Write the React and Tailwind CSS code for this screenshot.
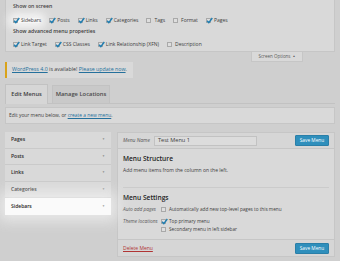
const Check = ({ checked }) => (
  <span className="relative inline-block w-[5px] h-[5px] shrink-0 border border-[#a9a9a9] bg-[#dedede]">
    {checked && (
      <svg viewBox="0 0 10 10" className="absolute -left-[1px] -top-[2px] w-[7px] h-[7px]">
        <path d="M1.5 5.5 L4 8 L9 1.5" fill="none" stroke="#1f7db0" strokeWidth="2" />
      </svg>
    )}
  </span>
);

const Opt = ({ label, checked = true, lit = false }) => (
  <span
    className={
      lit
        ? "flex items-center gap-[3px] bg-[#f7f7f7] shadow-[0_0_8px_5px_rgba(247,247,247,0.9)] rounded-sm"
        : "flex items-center gap-[3px]"
    }
  >
    <Check checked={checked} />
    <span>{label}</span>
  </span>
);

const accordion = ["Pages", "Posts", "Links", "Categories"];

export default function App() {
  return (
    <div className="w-[340px] h-[261px] overflow-hidden bg-[#cfcfcf] text-[#3c3c3c] font-['Open_Sans',sans-serif] text-[5px] leading-none">
      {/* screen options */}
      <div className="mx-[5px] h-[52px] bg-[#d9d9d9] border-x border-b border-[#c6c6c6] px-[7px] pt-[4px]">
        <div className="text-[5.2px] font-semibold h-[5px] flex items-center">Show on screen</div>
        <div className="flex items-center gap-[8px] mt-[7px] h-[8px]">
          <Opt label="Sidebars" lit />
          <Opt label="Posts" />
          <Opt label="Links" />
          <Opt label="Categories" />
          <Opt label="Tags" checked={false} />
          <Opt label="Format" checked={false} />
          <Opt label="Pages" />
        </div>
        <div className="text-[5.2px] font-semibold h-[5px] flex items-center mt-[5px]">
          Show advanced menu properties
        </div>
        <div className="flex items-center gap-[8px] mt-[6px] h-[8px]">
          <Opt label="Link Target" />
          <Opt label="CSS Classes" />
          <Opt label="Link Relationship (XFN)" />
          <Opt label="Description" checked={false} />
        </div>
      </div>
      <div className="flex justify-end pr-[37px]">
        <div className="w-[52px] h-[10px] bg-[#d9d9d9] border-x border-b border-[#c6c6c6] flex items-center justify-center gap-[2px] text-[#5a5a5a] text-[4.5px]">
          Screen Options <span className="text-[3px]">▲</span>
        </div>
      </div>

      {/* update notice */}
      <div className="ml-[5px] w-[128px] h-[16px] bg-[#d9d9d9] border-l-2 border-[#d9a31a] flex items-center pl-[5px] text-[5.3px]">
        <span className="underline text-[#24709c]">WordPress 4.0</span>
        <span>&nbsp;is available!&nbsp;</span>
        <span className="underline text-[#24709c]">Please update now</span>.
      </div>

      {/* tabs */}
      <div className="mx-[5px] mt-[6px] h-[20px] border-b border-[#c2c2c2] flex items-end gap-[4px]">
        <div className="w-[43px] h-[20px] -mb-px bg-[#d6d6d6] border border-b-0 border-[#c2c2c2] flex items-center justify-center font-semibold text-[5.7px]">
          Edit Menus
        </div>
        <div className="w-[58px] h-[18px] bg-[#c9c9c9] border border-b-0 border-[#c2c2c2] flex items-center justify-center font-semibold text-[5.8px] text-[#4a4a4a]">
          Manage Locations
        </div>
      </div>

      <div className="mx-[5px] mt-[3px] h-[17px] bg-[#d9d9d9] border border-[#c6c6c6] flex items-center pl-[3px] text-[4.9px]">
        Edit your menu below, or&nbsp;<span className="underline text-[#24709c]">create a new menu</span>.
      </div>

      {/* main */}
      <div className="flex mt-[8px] ml-[5px] gap-[6px]">
        <div className="w-[106px] flex flex-col">
          {accordion.map((t) => (
            <div
              key={t}
              className="h-[16.5px] bg-[#d9d9d9] border-b border-[#cacaca] flex items-center justify-between px-[6px] font-semibold text-[5px] text-[#2c2c2c]"
            >
              {t}
              <span className="text-[3px] text-[#8a8a8a]">▼</span>
            </div>
          ))}
          <div className="relative h-[16.5px] bg-[#fafafa] shadow-[0_0_14px_6px_rgba(250,250,250,0.6)] flex items-center justify-between px-[6px] font-semibold text-[5px] text-[#222]">
            Sidebars
            <span className="text-[3px] text-[#999]">▼</span>
          </div>
        </div>

        <div className="w-[218px] h-[125px] bg-[#d9d9d9] border border-[#c6c6c6] flex flex-col">
          <div className="h-[16px] bg-[#d6d6d6] border-b border-[#c6c6c6] flex items-center px-[5px]">
            <span className="italic text-[5px] text-[#555]">Menu Name</span>
            <div className="ml-[4px] w-[103px] h-[10px] bg-[#dcdcdc] border border-[#c2c2c2] flex items-center pl-[3px] text-[5.6px]">
              Test Menu 1
            </div>
            <div className="ml-auto w-[34px] h-[11px] bg-[#2f8fbc] rounded-[1px] border border-[#2a7fa8] text-white flex items-center justify-center text-[4.8px]">
              Save Menu
            </div>
          </div>
          <div className="px-[5px] flex-1">
            <div className="mt-[7px] font-semibold text-[6.6px] text-[#222]">Menu Structure</div>
            <div className="mt-[5px] text-[5px]">Add menu items from the column on the left.</div>
            <div className="mt-[14px] border-t border-[#cbcbcb]" />
            <div className="mt-[7px] font-semibold text-[6.6px] text-[#222]">Menu Settings</div>
            <div className="mt-[5px] flex items-center h-[7px]">
              <span className="w-[38px] italic text-[4.8px] text-[#555] whitespace-nowrap">Auto add pages</span>
              <Check />
              <span className="ml-[3px] text-[4.7px]">Automatically add new top-level pages to this menu</span>
            </div>
            <div className="mt-[5px] flex items-center h-[7px]">
              <span className="w-[38px] italic text-[4.8px] text-[#555] whitespace-nowrap">Theme locations</span>
              <Check checked />
              <span className="ml-[3px] text-[4.7px]">Top primary menu</span>
            </div>
            <div className="mt-[1px] flex items-center h-[7px]">
              <span className="w-[38px]" />
              <Check />
              <span className="ml-[3px] text-[4.7px]">Secondary menu in left sidebar</span>
            </div>
          </div>
          <div className="h-[17px] border-t border-[#c6c6c6] bg-[#d6d6d6] flex items-center px-[5px]">
            <span className="underline text-[#b03434] text-[5px]">Delete Menu</span>
            <div className="ml-auto w-[34px] h-[11px] bg-[#2f8fbc] rounded-[1px] border border-[#2a7fa8] text-white flex items-center justify-center text-[4.8px]">
              Save Menu
            </div>
          </div>
        </div>
      </div>
    </div>
  );
}
